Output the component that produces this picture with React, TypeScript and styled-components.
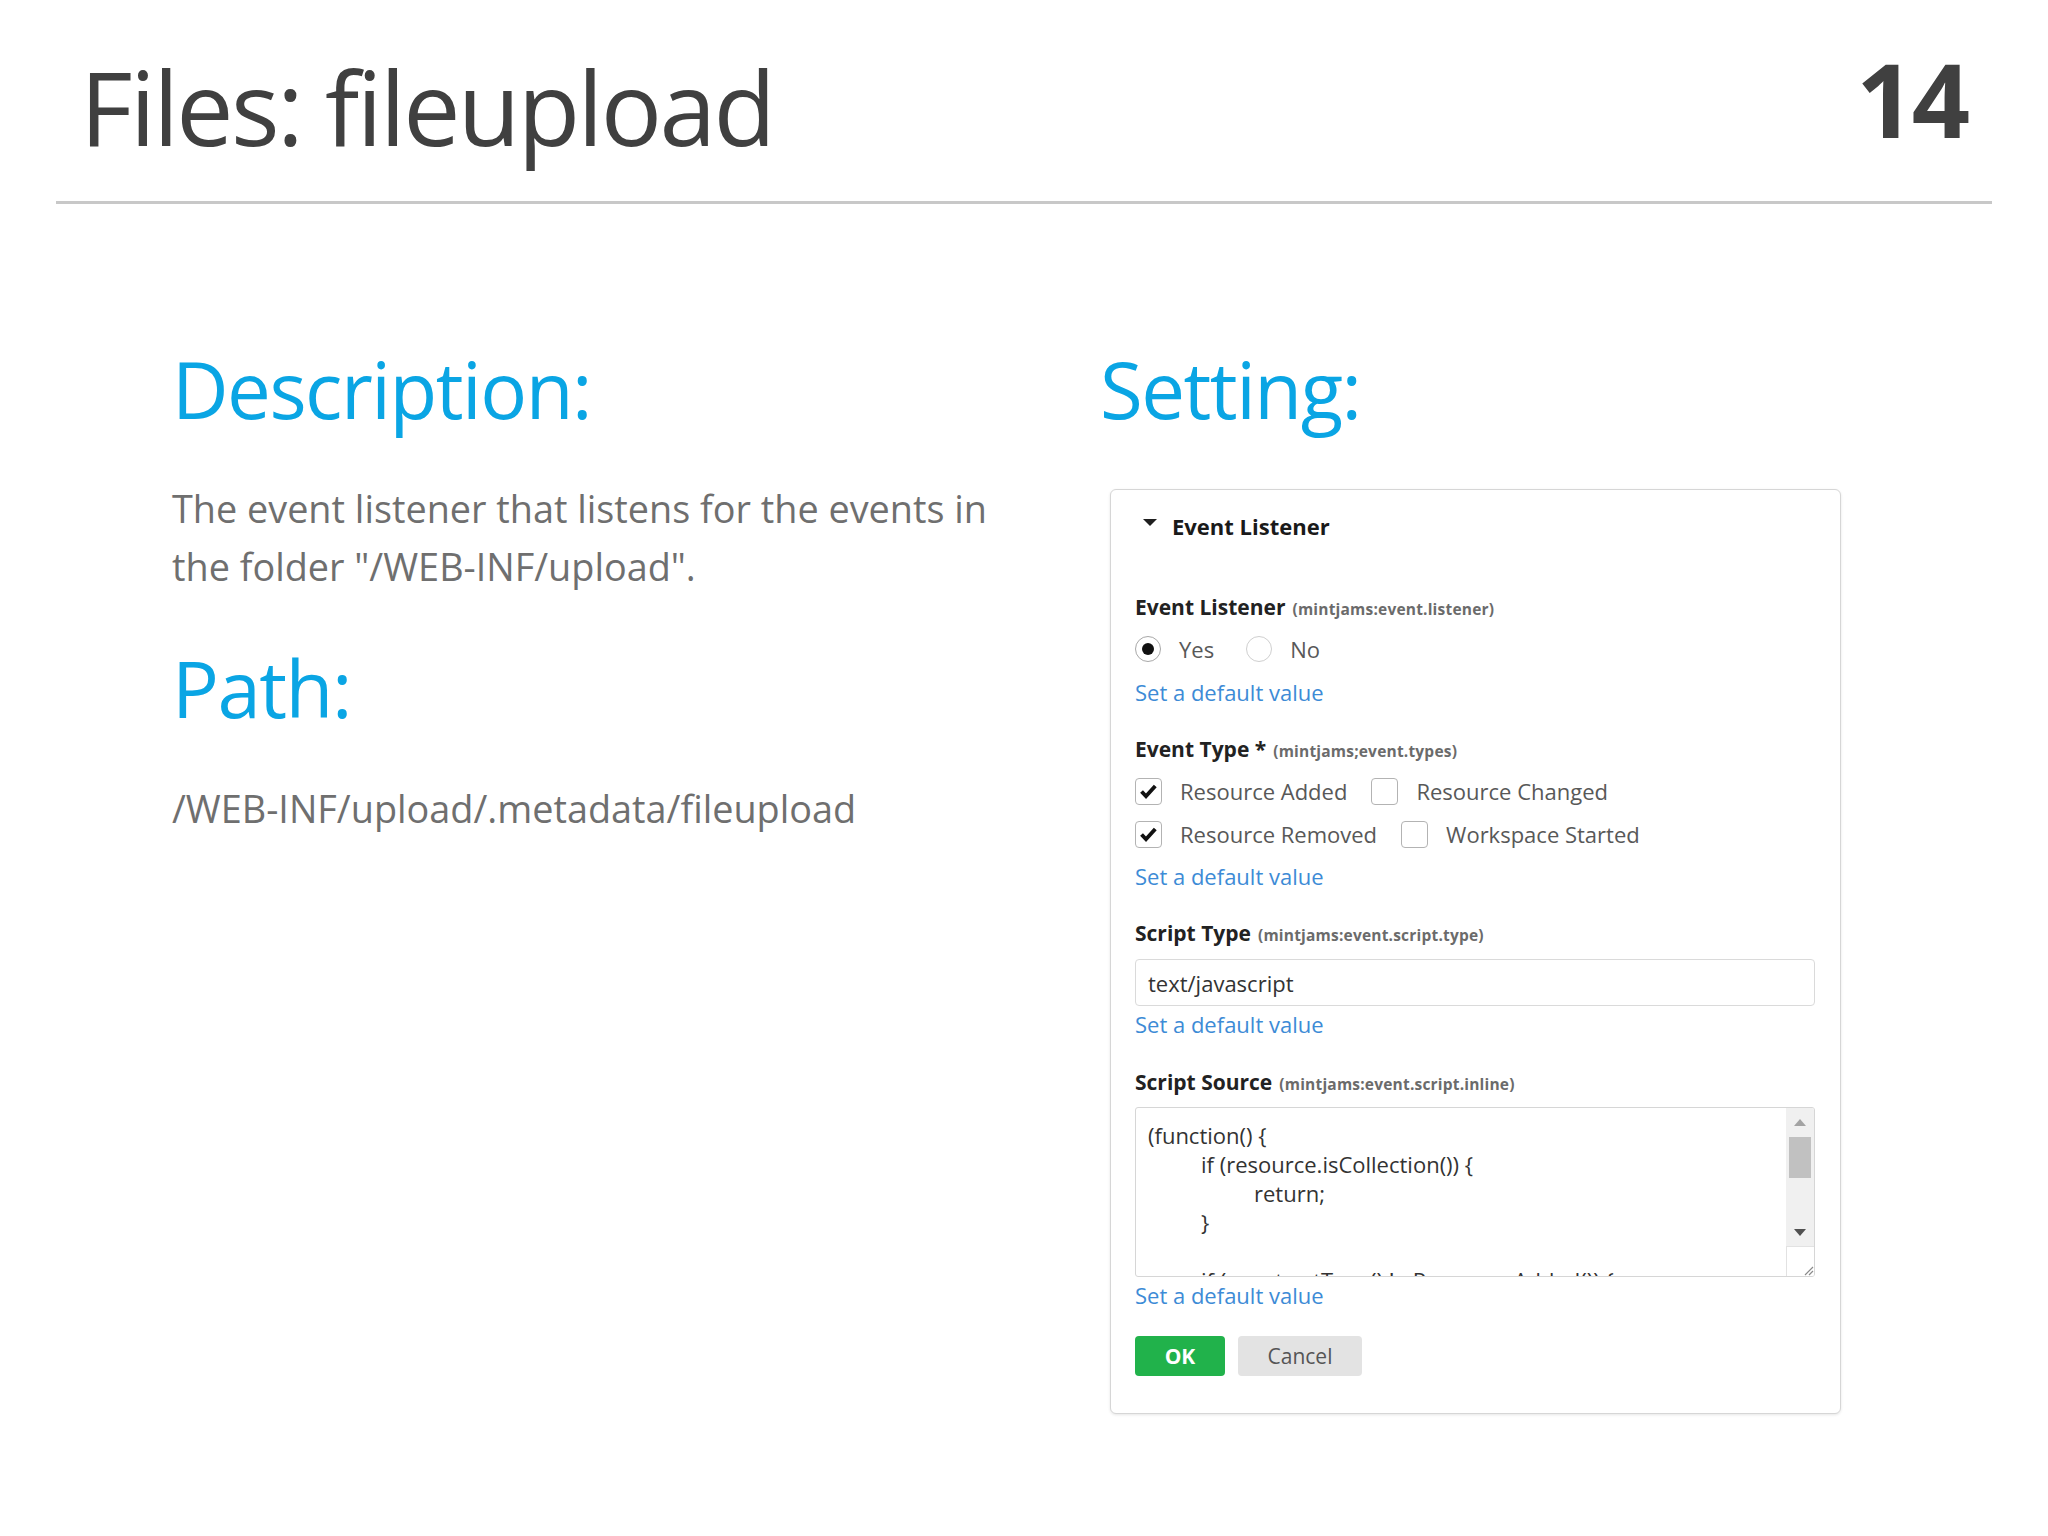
import { FC } from "react";
import styled, { createGlobalStyle } from "styled-components";

const GlobalStyle = createGlobalStyle`
  html, body {
    margin: 0;
    padding: 0;
    background: #ffffff;
  }

  body {
    font-family: "Open Sans", "Noto Sans", sans-serif;
  }
`;

type CodeLine = { indent: number; text: string };

const SCRIPT: CodeLine[] = [
  { indent: 0, text: "(function() {" },
  { indent: 1, text: "if (resource.isCollection()) {" },
  { indent: 2, text: "return;" },
  { indent: 1, text: "}" },
  { indent: 0, text: "" },
  { indent: 1, text: "if (event.getType() != Resource.Added()) {" },
];

const CheckIcon = () => (
  <svg width="27" height="27" viewBox="0 0 27 27">
    <path d="M6 13.5 L10.8 18.6 L20.8 7.6" fill="none" stroke="#111" strokeWidth="4.2" strokeLinejoin="miter" />
  </svg>
);

const Radio: FC<{ checked?: boolean; label: string }> = ({ checked, label }) => (
  <Option $gap={32}>
    <RadioCircle $checked={checked}>{checked && <RadioDot />}</RadioCircle>
    <OptionText>{label}</OptionText>
  </Option>
);

const Check: FC<{ checked?: boolean; label: string }> = ({ checked, label }) => (
  <Option $gap={24}>
    <CheckBox>{checked && <CheckIcon />}</CheckBox>
    <OptionText>{label}</OptionText>
  </Option>
);

const App: FC = () => {
  return (
    <>
      <GlobalStyle />
      <Slide>
        <Header>
          <Title>Files: fileupload</Title>
          <PageNo>14</PageNo>
        </Header>
        <Rule />

        <Content>
          <LeftColumn>
            <Heading>Description:</Heading>
            <Body $mt={44}>The event listener that listens for the events in the folder "/WEB-INF/upload".</Body>
            <Heading $mt={45}>Path:</Heading>
            <Body $mt={45}>/WEB-INF/upload/.metadata/fileupload</Body>
          </LeftColumn>

          <RightColumn>
            <Heading>Setting:</Heading>
            <Panel>
              <PanelHeader>
                <svg width="14" height="8" viewBox="0 0 14 8" style={{ marginTop: 8 }}>
                  <polygon points="0,0 14,0 7,7" fill="#1f1f1f" />
                </svg>
                <PanelTitle>Event Listener</PanelTitle>
              </PanelHeader>

              <FieldLabel $mt={52}>
                Event Listener<Note>(mintjams:event.listener)</Note>
              </FieldLabel>
              <OptionRow $mt={13}>
                <Radio checked label="Yes" />
                <Radio label="No" />
              </OptionRow>
              <DefaultLink $mt={13}>Set a default value</DefaultLink>

              <FieldLabel $mt={28}>
                Event Type *<Note>(mintjams;event.types)</Note>
              </FieldLabel>
              <OptionRow $mt={13}>
                <Check checked label="Resource Added" />
                <Check label="Resource Changed" />
              </OptionRow>
              <OptionRow $mt={13}>
                <Check checked label="Resource Removed" />
                <Check label="Workspace Started" />
              </OptionRow>
              <DefaultLink $mt={12}>Set a default value</DefaultLink>

              <FieldLabel $mt={28}>
                Script Type<Note>(mintjams:event.script.type)</Note>
              </FieldLabel>
              <TextInput>text/javascript</TextInput>
              <DefaultLink $mt={3}>Set a default value</DefaultLink>

              <FieldLabel $mt={29}>
                Script Source<Note>(mintjams:event.script.inline)</Note>
              </FieldLabel>
              <TextArea>
                <Code>
                  {SCRIPT.map((line, i) => (
                    <CodeRow key={i} $indent={line.indent}>
                      {line.text || "\u00a0"}
                    </CodeRow>
                  ))}
                </Code>
                <ScrollBar>
                  <ScrollButton>
                    <svg width="12" height="7" viewBox="0 0 12 7">
                      <polygon points="0,7 12,7 6,0" fill="#a3a3a3" />
                    </svg>
                  </ScrollButton>
                  <ScrollTrack>
                    <ScrollThumb />
                  </ScrollTrack>
                  <ScrollButton>
                    <svg width="12" height="7" viewBox="0 0 12 7">
                      <polygon points="0,0 12,0 6,7" fill="#505050" />
                    </svg>
                  </ScrollButton>
                  <ResizeCorner>
                    <svg width="12" height="12" viewBox="0 0 12 12">
                      <path d="M11 3 L3 11 M11 7 L7 11" stroke="#8a8a8a" strokeWidth="1.2" />
                    </svg>
                  </ResizeCorner>
                </ScrollBar>
              </TextArea>
              <DefaultLink $mt={3}>Set a default value</DefaultLink>

              <ButtonRow>
                <OkButton>OK</OkButton>
                <CancelButton>Cancel</CancelButton>
              </ButtonRow>
            </Panel>
          </RightColumn>
        </Content>
      </Slide>
    </>
  );
};

const Slide = styled.div`
  width: 2048px;
  min-height: 1536px;
  background: #ffffff;
`;

const Header = styled.header`
  display: flex;
  justify-content: space-between;
  align-items: flex-start;
  padding: 48px 81px 0 80px;
`;

const Title = styled.h1`
  margin: 8px 0 0;
  font-family: "Open Sans", sans-serif;
  font-weight: 400;
  font-size: 102px;
  line-height: 102px;
  letter-spacing: -2.6px;
  color: #404040;
`;

const PageNo = styled.div`
  font-family: "Open Sans", sans-serif;
  font-weight: 700;
  font-size: 102px;
  line-height: 102px;
  letter-spacing: -3px;
  color: #404040;
`;

const Rule = styled.hr`
  height: 3px;
  margin: 43px 56px 0;
  border: none;
  background: #c8c8c8;
`;

const Content = styled.main`
  display: flex;
  margin-top: 138px;
  padding-left: 172px;
`;

const LeftColumn = styled.section`
  width: 928px;
`;

const RightColumn = styled.section`
  flex: none;
`;

const Heading = styled.h2<{ $mt?: number }>`
  margin: ${({ $mt }) => $mt ?? 0}px 0 0;
  font-family: "Open Sans", sans-serif;
  font-weight: 400;
  font-size: 78px;
  line-height: 94px;
  letter-spacing: -1.5px;
  color: #0aa5e4;
`;

const Body = styled.p<{ $mt?: number }>`
  width: 860px;
  margin: ${({ $mt }) => $mt ?? 0}px 0 0;
  font-family: "Open Sans", sans-serif;
  font-size: 37.8px;
  line-height: 58px;
  color: #6f6f6f;
`;

const Panel = styled.div`
  box-sizing: border-box;
  width: 731px;
  margin: 53px 0 0 10px;
  padding: 21px 25px 37px 24px;
  border: 1px solid #d6d6d6;
  border-radius: 6px;
  box-shadow: 0 1px 3px rgba(0, 0, 0, 0.1);
  background: #ffffff;
  font-family: "Open Sans", sans-serif;
`;

const PanelHeader = styled.div`
  display: flex;
  align-items: flex-start;
  gap: 15px;
  padding-left: 8px;
`;

const PanelTitle = styled.div`
  font-size: 22px;
  font-weight: 700;
  line-height: 30px;
  color: #1a1a1a;
`;

const FieldLabel = styled.div<{ $mt: number }>`
  height: 28px;
  margin-top: ${({ $mt }) => $mt}px;
  font-size: 21px;
  font-weight: 700;
  line-height: 28px;
  color: #222222;
`;

const Note = styled.span`
  margin-left: 7px;
  font-size: 15.5px;
  font-weight: 700;
  line-height: 1;
  letter-spacing: 0.2px;
  color: #6b6b6b;
`;

const OptionRow = styled.div<{ $mt: number }>`
  display: flex;
  align-items: center;
  height: 30px;
  margin-top: ${({ $mt }) => $mt}px;
`;

const Option = styled.label<{ $gap: number }>`
  display: flex;
  align-items: center;
  gap: 18px;
  margin-right: ${({ $gap }) => $gap}px;
`;

const OptionText = styled.span`
  font-size: 22px;
  line-height: 30px;
  color: #585858;
`;

const RadioCircle = styled.span<{ $checked?: boolean }>`
  box-sizing: border-box;
  display: flex;
  align-items: center;
  justify-content: center;
  width: 26px;
  height: 26px;
  border: 1px solid ${({ $checked }) => ($checked ? "#a8a8a8" : "#cfcfcf")};
  border-radius: 50%;
  background: #ffffff;
`;

const RadioDot = styled.span`
  width: 12px;
  height: 12px;
  border-radius: 50%;
  background: #111111;
`;

const CheckBox = styled.span`
  box-sizing: border-box;
  display: flex;
  align-items: center;
  justify-content: center;
  width: 27px;
  height: 27px;
  border: 1px solid #b3b3b3;
  border-radius: 4px;
  background: #ffffff;
`;

const DefaultLink = styled.a<{ $mt: number }>`
  display: block;
  margin-top: ${({ $mt }) => $mt}px;
  font-size: 22px;
  line-height: 30px;
  color: #3d8bd6;
  text-decoration: none;
  cursor: pointer;
`;

const TextInput = styled.div`
  box-sizing: border-box;
  display: flex;
  align-items: center;
  height: 47px;
  margin-top: 12px;
  padding: 0 12px;
  border: 1px solid #dadada;
  border-radius: 4px;
  font-size: 22px;
  color: #333333;
`;

const TextArea = styled.div`
  box-sizing: border-box;
  display: flex;
  height: 170px;
  margin-top: 11px;
  border: 1px solid #d6d6d6;
  border-radius: 3px;
  overflow: hidden;
`;

const Code = styled.div`
  flex: 1;
  padding: 13px 12px 0;
  overflow: hidden;
  font-size: 22px;
  line-height: 29px;
  color: #333333;
  white-space: pre;
`;

const CodeRow = styled.div<{ $indent: number }>`
  padding-left: ${({ $indent }) => $indent * 53}px;
`;

const ScrollBar = styled.div`
  display: flex;
  flex-direction: column;
  width: 28px;
  background: #f0f0f0;
`;

const ScrollButton = styled.div`
  display: flex;
  align-items: center;
  justify-content: center;
  height: 28px;
`;

const ScrollTrack = styled.div`
  flex: 1;
  padding: 1px 3px 0;
`;

const ScrollThumb = styled.div`
  height: 41px;
  background: #c1c1c1;
`;

const ResizeCorner = styled.div`
  display: flex;
  align-items: flex-end;
  justify-content: flex-end;
  height: 29px;
  border-top: 1px solid #e2e2e2;
  border-left: 1px solid #e2e2e2;
  background: #ffffff;
`;

const ButtonRow = styled.div`
  display: flex;
  gap: 13px;
  margin-top: 26px;
`;

const OkButton = styled.button`
  width: 90px;
  height: 40px;
  border: none;
  border-radius: 4px;
  background: #21b24b;
  color: #ffffff;
  font-family: "Open Sans", sans-serif;
  font-size: 21px;
  font-weight: 700;
  cursor: pointer;
`;

const CancelButton = styled.button`
  width: 124px;
  height: 40px;
  border: none;
  border-radius: 4px;
  background: #e3e3e3;
  color: #555555;
  font-family: "Open Sans", sans-serif;
  font-size: 21px;
  cursor: pointer;
`;

export default App;
